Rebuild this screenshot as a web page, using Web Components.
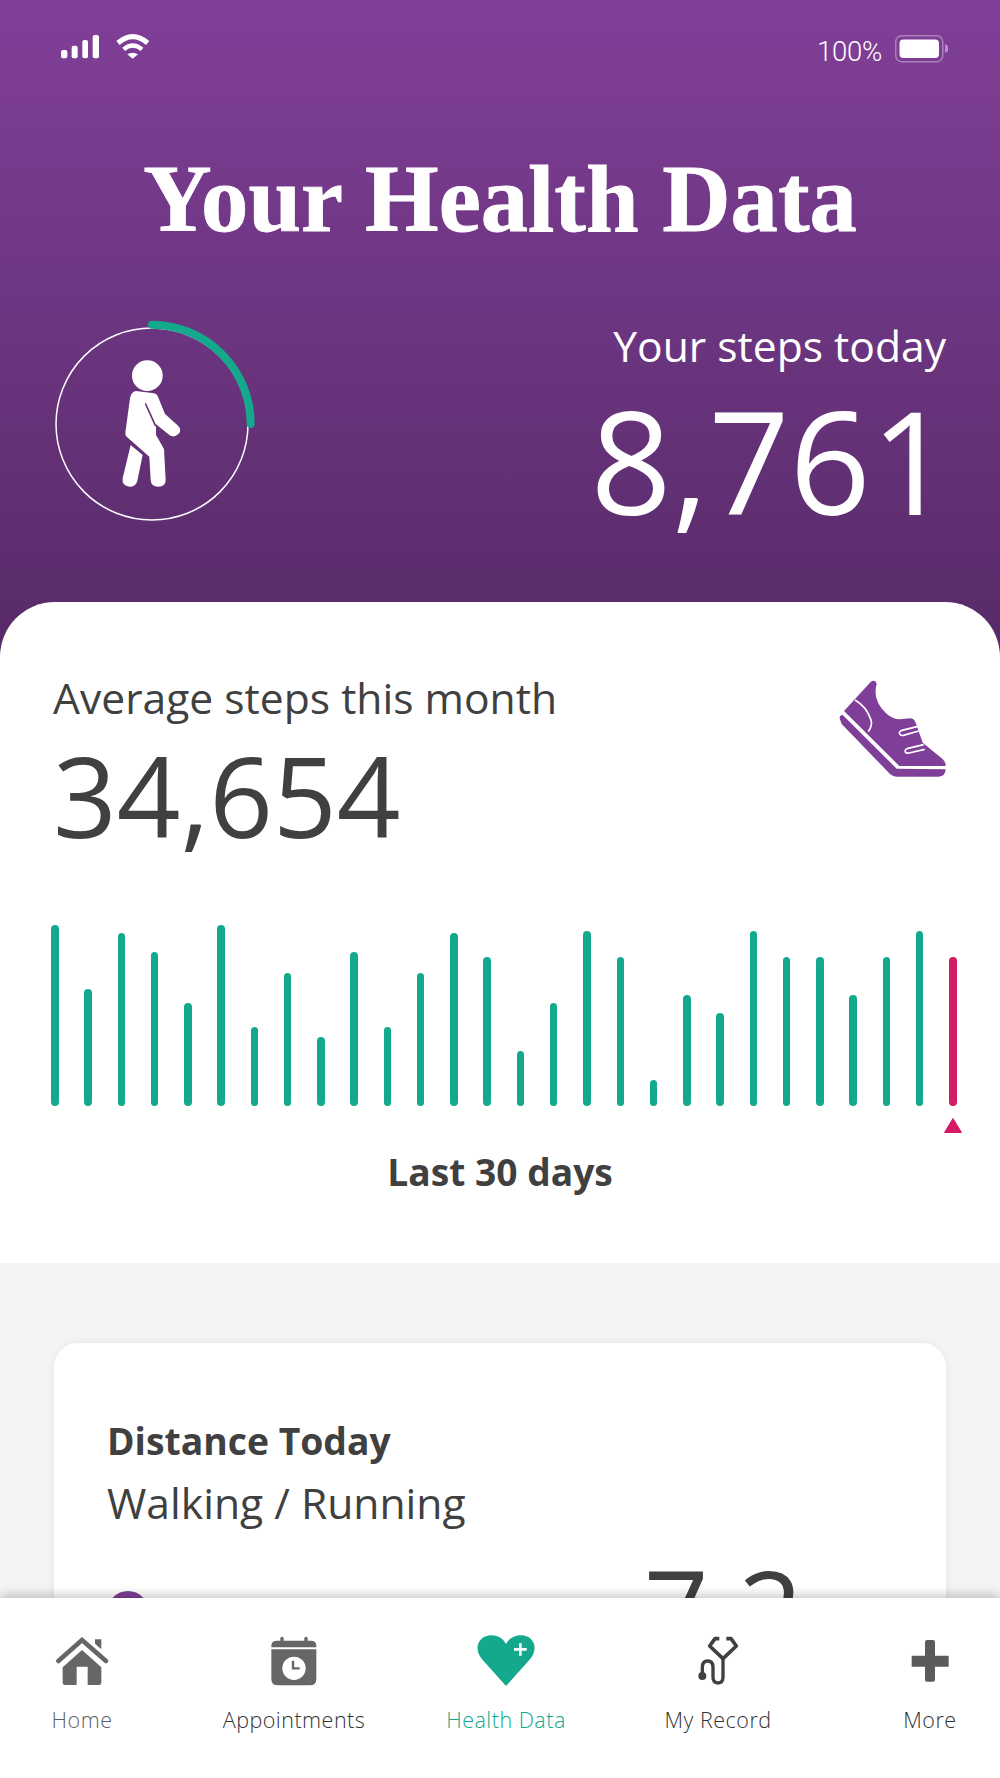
<!DOCTYPE html>
<html lang="en">
<head>
<meta charset="utf-8">
<title>Your Health Data</title>
<style>
  html, body { margin: 0; background: #f3f5f4; }
  body { font-family: "Open Sans", "Liberation Sans", sans-serif; color: #404040; }
</style>
</head>
<body>
<health-screen>
  <steps-header slot="header" steps="8,761"></steps-header>
  <month-panel average="34,654" values="181,117,173,154,103,181,79,133,69,154,79,133,173,149,55,103,175,149,26,111,93,175,149,149,111,149,175,149"></month-panel>
  <metric-card title="Distance Today" subtitle="Walking / Running" value="7.2"></metric-card>
  <tab-bar slot="nav">
    <tab-item style="--tab-color:#5f5f5f">
      <svg slot="icon" viewBox="128 219 240 180" width="80" height="60">
        <path d="M177 303 248 240 320 303" fill="none" stroke="#666" stroke-width="14" stroke-linecap="round" stroke-linejoin="miter"/>
        <path d="M287 238H306V268L287 251Z" fill="#666"/>
        <path d="M190 322 248 270 306 322V368Q306 375 299 375H265V320H232V375H197Q190 375 190 368Z" fill="#666"/>
      </svg>
      Home
    </tab-item>
    <tab-item>
      <svg slot="icon" viewBox="761 219 240 180" width="80" height="60">
        <path d="M813 262V258Q813 242 830 242H840V234Q845 226 850 234V242H912V234Q917 226 922 234V242H932Q948 242 948 258V262Z" fill="#666"/>
        <path d="M813 268H948V356Q948 376 928 376H833Q813 376 813 356Z" fill="#666"/>
        <circle cx="881" cy="325" r="35" fill="#fff"/>
        <path d="M878 302V325H898" fill="none" stroke="#666" stroke-width="7"/>
      </svg>
      Appointments
    </tab-item>
    <tab-item style="--tab-color:#14a98d">
      <svg slot="icon" viewBox="-103 219 240 180" width="80" height="60">
        <path d="M17 378-55 298C-84 262-62 226-27 226-5 226 9 238 17 252 25 238 39 226 62 226 97 226 118 262 89 298Z" fill="#14a98d"/>
        <path d="M60 250V287M41 268H79" fill="none" stroke="#fff" stroke-width="8"/>
      </svg>
      Health Data
    </tab-item>
    <tab-item>
      <svg slot="icon" viewBox="533 219 240 180" width="80" height="60">
        <path d="M657 236H644L628 258 668 296 708 258 692 236H678" fill="none" stroke="#404040" stroke-width="11" stroke-linejoin="round"/>
        <path d="M668 296V352Q668 369 653 369 638 369 638 352V322Q638 303 622 303 606 303 606 322V348" fill="none" stroke="#404040" stroke-width="10"/>
        <circle cx="606" cy="348" r="12" fill="#404040"/>
      </svg>
      My Record
    </tab-item>
    <tab-item>
      <svg slot="icon" viewBox="1167 219 240 180" width="80" height="60">
        <path d="M1272 246Q1272 240 1278 240H1296Q1302 240 1302 246V287H1343V320H1302V359Q1302 365 1296 365H1278Q1272 365 1272 359V320H1232V287H1272Z" fill="#5b5b5b"/>
      </svg>
      More
    </tab-item>
  </tab-bar>
</health-screen>

<script>
class HealthScreen extends HTMLElement {
  constructor() {
    super();
    this.attachShadow({ mode: "open" });
    this.shadowRoot.innerHTML = /* html */`
      <style>
        :host {
          display: flex;
          flex-direction: column;
          width: 1000px;
          height: 1778px;
          overflow: hidden;
          background: #f3f5f4;
        }
        .scroll { flex: 1; min-height: 0; overflow: hidden; display: flex; flex-direction: column; }
      </style>
      <div class="scroll">
        <slot name="header"></slot>
        <slot></slot>
      </div>
      <slot name="nav"></slot>
    `;
  }
}

class StepsHeader extends HTMLElement {
  constructor() {
    super();
    this.attachShadow({ mode: "open" });
  }

  connectedCallback() {
    this.shadowRoot.innerHTML = /* html */`
      <style>
        :host {
          display: block;
          flex: none;
          height: 657px;
          box-sizing: border-box;
          padding-top: 25px;
          color: #fff;
          background: linear-gradient(#813f98, #5a2c6b 602px, #57296a);
        }
        .status { display: flex; justify-content: space-between; align-items: flex-start; padding-left: 50px; padding-right: 52px; }
        .power { display: flex; align-items: flex-start; }
        .power span {
          font: 300 27.500px/1 Roboto, "Liberation Sans", sans-serif;
          letter-spacing: -.3px;
          margin-top: 13px;
          margin-right: 13px;
        }
        .power svg { margin-top: 10px; }
        h1 {
          margin: 82px 0 0;
          text-align: center;
          font: 700 94.700px/1 "Liberation Serif", serif;
          -webkit-text-stroke: .8px #fff;
        }
        .row { display: flex; justify-content: space-between; align-items: flex-start; padding: 0 54px 0 30px; margin-top: 53px; }
        .steps { text-align: right; }
        .label { font-size: 42.600px; line-height: 57px; margin-top: 17px; }
        .count { font-size: 142px; line-height: 1; margin-top: 15px; margin-right: -6px; }
      </style>
      <div class="status">
        <svg viewBox="0 0 330 135" width="110" height="45">
          <g fill="#fff">
            <rect x="33" y="75" width="19" height="25" rx="6"/>
            <rect x="65" y="62" width="18" height="38" rx="6"/>
            <rect x="97" y="45" width="17" height="55" rx="6"/>
            <rect x="128" y="30" width="19" height="70" rx="6"/>
            <path d="M232 88Q248 78 264 88L248 101Z"/>
          </g>
          <g fill="none" stroke="#fff">
            <path d="M204 54Q248 16 293 54" stroke-width="15"/>
            <path d="M221 73Q248 50 276 73" stroke-width="13"/>
          </g>
        </svg>
        <div class="power">
          <span>100%</span>
          <svg viewBox="0 0 53 28" width="53" height="28">
            <rect x=".75" y=".75" width="47" height="26" rx="6" fill="none" stroke="#fff" stroke-opacity=".35" stroke-width="1.5"/>
            <rect x="4.5" y="4.5" width="39.500" height="18.500" rx="4" fill="#fff"/>
            <path d="M50 9 53 11V16L50 18Z" fill="#fff" fill-opacity=".45"/>
          </svg>
        </div>
      </div>
      <h1>Your Health Data</h1>
      <div class="row">
        <svg viewBox="0 0 780 720" width="260" height="240">
          <circle cx="366" cy="372" r="288" fill="none" stroke="#fff" stroke-width="4.500"/>
          <path d="M366 74A298 298 0 0 1 662 372" fill="none" stroke="#14a98d" stroke-width="24" stroke-linecap="round"/>
          <g fill="#fff">
            <circle cx="352" cy="227" r="46"/>
            <path d="M318 273 372 280Q380 281 384 290L405 342 445 378Q457 392 445 402 432 415 418 405L378 373V405L402 447 407 540Q407 560 385 560 363 560 362 540L358 470 290 410Q285 405 286 398L300 295Q303 275 318 273Z"/>
            <path d="M302 435 338 465 322 542Q318 560 298 560 275 558 278 535Z"/>
          </g>
          <path d="M347 312 376 376" stroke="#693374" stroke-width="5" stroke-linecap="round"/>
        </svg>
        <div class="steps">
          <div class="label">Your steps today</div>
          <div class="count">${this.getAttribute("steps")}</div>
        </div>
      </div>
    `;
  }
}

class MonthPanel extends HTMLElement {
  constructor() {
    super();
    this.attachShadow({ mode: "open" });
  }

  connectedCallback() {
    const values = this.getAttribute("values").split(",").map(Number);
    const bars = values.map((height, i) => {
      const last = i === values.length - 1 ? " today" : "";
      return `<i class="bar${last}" style="height:${height}px"></i>`;
    }).join("");

    this.shadowRoot.innerHTML = /* html */`
      <style>
        :host {
          display: block;
          flex: none;
          position: relative;
          margin-top: -55px;
          height: 661px;
          box-sizing: border-box;
          padding-top: 58px;
          background: #fff;
          border-radius: 55px 55px 0 0;
        }
        .top { display: flex; justify-content: space-between; height: 265px; padding: 0 20px 0 53px; }
        .label { font-size: 42.600px; line-height: 57px; margin-top: 9px; }
        .avg { font-size: 111.500px; line-height: 1; margin-top: 14px; }
        .chart {
          display: flex;
          justify-content: space-between;
          align-items: flex-end;
          height: 181px;
          margin: 0 43px 0 51px;
        }
        .bar { display: block; width: 7.500px; background: #14a98d; border-radius: 4px; }
        .today { background: #d41b65; }
        .marker { display: flex; justify-content: flex-end; padding-right: 38px; margin-top: 12px; height: 15px; }
        .caption { text-align: center; font-size: 37.200px; font-weight: 700; line-height: 48px; margin-top: 15px; }
      </style>
      <div class="top">
        <div>
          <div class="label">Average steps this month</div>
          <div class="avg">${this.getAttribute("average")}</div>
        </div>
        <svg viewBox="0 0 540 390" width="180" height="130">
          <g fill="#7f3f98">
            <path d="M165 117 212 66Q226 56 230 72 216 120 258 160 278 178 300 178L330 175Q342 175 347 188L368 248 425 295Q438 305 437 318H298L132 153Z"/>
            <path d="M119 175Q118 165 128 165L290 326 437 328Q436 350 415 350H290Q279 350 270 342L125 192Z"/>
          </g>
          <g fill="none" stroke="#fff" stroke-width="5">
            <path d="M165 120Q200 140 213 180 218 195 205 215"/>
            <path d="M354 199 306 211Q296 215 299 222 302 228 310 226L356 213"/>
            <path d="M371 254 324 265Q313 269 316 276 319 281 327 279L374 268"/>
          </g>
        </svg>
      </div>
      <div class="chart">${bars}</div>
      <div class="marker">
        <svg viewBox="0 0 18 15" width="18" height="15"><path d="M9 .5 17.500 14.500H.500Z" fill="#d41b65" stroke="#d41b65" stroke-linejoin="round"/></svg>
      </div>
      <div class="caption">Last 30 days</div>
    `;
  }
}

class MetricCard extends HTMLElement {
  constructor() {
    super();
    this.attachShadow({ mode: "open" });
  }

  connectedCallback() {
    this.shadowRoot.innerHTML = /* html */`
      <style>
        :host {
          display: block;
          flex: none;
          margin: 80px 54px 0;
          height: 420px;
          box-sizing: border-box;
          padding: 73px 53px 0;
          background: #fff;
          border-radius: 24px;
          box-shadow: 0 1px 8px rgba(0,0,0,.08);
        }
        .title { font-size: 37.300px; font-weight: 700; line-height: 50px; }
        .sub { font-size: 42.600px; line-height: 57px; margin-top: 8px; }
        .row { display: flex; align-items: flex-start; }
        .dot { flex: none; width: 42px; height: 42px; border-radius: 50%; background: #7f3f98; margin-top: 60px; }
        .value { font-size: 113px; line-height: 1; margin: 22px 0 0 495px; }
      </style>
      <div class="title">${this.getAttribute("title")}</div>
      <div class="sub">${this.getAttribute("subtitle")}</div>
      <div class="row">
        <div class="dot"></div>
        <div class="value">${this.getAttribute("value")}</div>
      </div>
    `;
  }
}

class TabBar extends HTMLElement {
  constructor() {
    super();
    this.attachShadow({ mode: "open" });
    // columns are wider than the screen, the outer two labels sit close to the edges
    this.shadowRoot.innerHTML = /* html */`
      <style>
        :host {
          display: grid;
          flex: none;
          position: relative;
          grid-template-columns: repeat(5, 212px);
          justify-content: center;
          height: 180px;
          box-sizing: border-box;
          padding: 35px 0 0 12px;
          background: #fff;
          box-shadow: 0 -3px 10px rgba(0,0,0,.22);
        }
      </style>
      <slot></slot>
    `;
  }
}

class TabItem extends HTMLElement {
  constructor() {
    super();
    this.attachShadow({ mode: "open" });
    this.shadowRoot.innerHTML = /* html */`
      <style>
        :host {
          display: flex;
          flex-direction: column;
          align-items: center;
          font-size: 21.500px;
          font-weight: 300;
          line-height: 29px;
          letter-spacing: .5px;
          color: var(--tab-color, #333);
        }
        .icon { display: block; height: 60px; margin-bottom: 12px; }
      </style>
      <div class="icon"><slot name="icon"></slot></div>
      <slot></slot>
    `;
  }
}

customElements.define("health-screen", HealthScreen);
customElements.define("steps-header", StepsHeader);
customElements.define("month-panel", MonthPanel);
customElements.define("metric-card", MetricCard);
customElements.define("tab-bar", TabBar);
customElements.define("tab-item", TabItem);
</script>
</body>
</html>
